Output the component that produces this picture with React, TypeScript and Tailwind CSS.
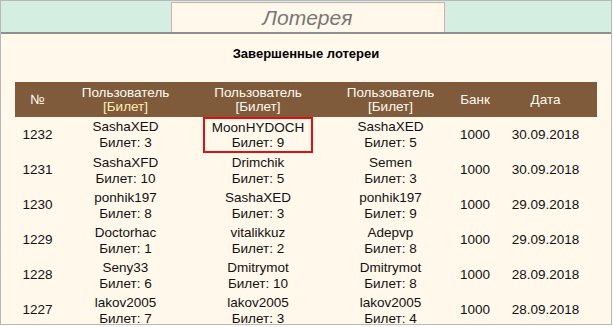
import React from "react";

type Row = {
  id: number;
  p1: [string, number];
  p2: [string, number];
  p3: [string, number];
  bank: number;
  date: string;
};

const rows: Row[] = [
  { id: 1232, p1: ["SashaXED", 3], p2: ["MoonHYDOCH", 9], p3: ["SashaXED", 5], bank: 1000, date: "30.09.2018" },
  { id: 1231, p1: ["SashaXFD", 10], p2: ["Drimchik", 5], p3: ["Semen", 3], bank: 1000, date: "30.09.2018" },
  { id: 1230, p1: ["ponhik197", 8], p2: ["SashaXED", 3], p3: ["ponhik197", 9], bank: 1000, date: "29.09.2018" },
  { id: 1229, p1: ["Doctorhac", 1], p2: ["vitalikkuz", 2], p3: ["Adepvp", 8], bank: 1000, date: "29.09.2018" },
  { id: 1228, p1: ["Seny33", 6], p2: ["Dmitrymot", 10], p3: ["Dmitrymot", 8], bank: 1000, date: "28.09.2018" },
  { id: 1227, p1: ["lakov2005", 7], p2: ["lakov2005", 3], p3: ["lakov2005", 4], bank: 1000, date: "28.09.2018" },
];

function Player({ p, marked }: { p: [string, number]; marked?: boolean }) {
  return (
    <td className="p-0 text-center align-middle">
      <div
        className={
          marked
            ? "mx-auto w-[110px] border-2 border-[#e01010] leading-[15px] py-px"
            : "leading-[16px]"
        }
      >
        <div>{p[0]}</div>
        <div>Билет: {p[1]}</div>
      </div>
    </td>
  );
}

export default function App() {
  return (
    <div
      className="w-[613px] h-[327px] bg-white text-black"
      style={{ fontFamily: '"Liberation Sans", Arial, sans-serif' }}
    >
      <div className="w-[612px] h-[325px] border border-[#b8b8b8] bg-[#fff8eb] flex flex-col overflow-hidden">
        {/* tab bar */}
        <div className="h-[33px] bg-[#d4efe1] border-b-2 border-[#8f8f8f] flex justify-center shrink-0">
          <div className="mt-px w-[274px] ml-[3px] border border-b-0 border-[#dcaaaa] bg-[#fff8eb] flex items-center justify-center">
            <span className="italic text-[21px] text-[#777777] leading-none">Лотерея</span>
          </div>
        </div>

        <div className="text-center font-bold text-[13px] mt-[12px] leading-[16px]">
          Завершенные лотереи
        </div>

        <table className="mt-[20px] ml-[14px] w-[582px] table-fixed border-collapse text-[13.5px] text-[#111]">
          <colgroup>
            <col className="w-[45px]" />
            <col className="w-[131px]" />
            <col className="w-[134px]" />
            <col className="w-[131px]" />
            <col className="w-[38px]" />
            <col className="w-[103px]" />
          </colgroup>
          <thead>
            <tr className="h-[35px] bg-[#7f5a3b] text-[#fffaf0] leading-[14px]">
              <th className="font-normal">№</th>
              <th className="font-normal">
                Пользователь
                <br />
                <span className="text-[#ffedb0]">[Билет]</span>
              </th>
              <th className="font-normal">
                Пользователь
                <br />
                [Билет]
              </th>
              <th className="font-normal">
                Пользователь
                <br />
                [Билет]
              </th>
              <th className="font-normal">Банк</th>
              <th className="font-normal">Дата</th>
            </tr>
          </thead>
          <tbody>
            {rows.map((r, i) => (
              <tr key={r.id} className="h-[35px]">
                <td className="text-center">{r.id}</td>
                <Player p={r.p1} />
                <Player p={r.p2} marked={i === 0} />
                <Player p={r.p3} />
                <td className="text-center">{r.bank}</td>
                <td className="text-center">{r.date}</td>
              </tr>
            ))}
          </tbody>
        </table>
      </div>
    </div>
  );
}
